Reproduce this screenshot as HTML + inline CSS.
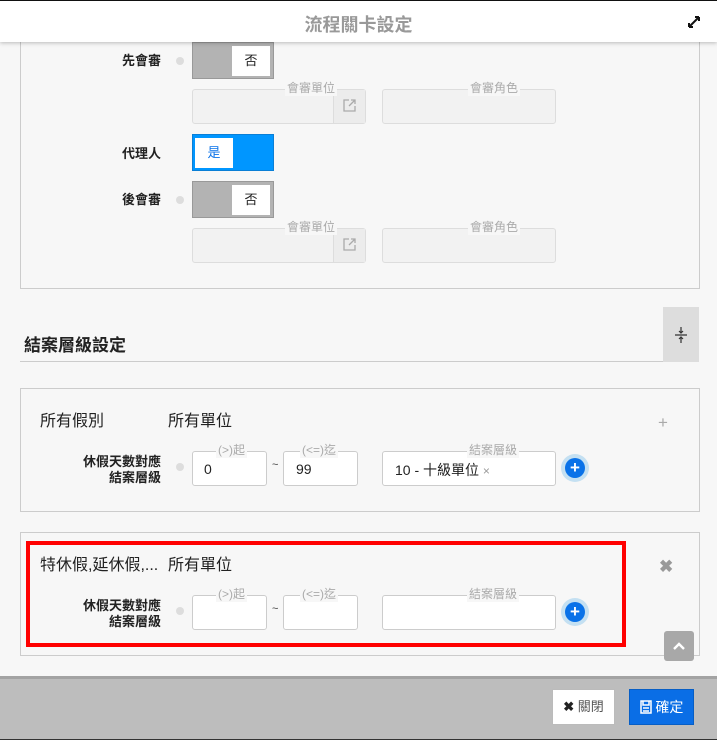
<!DOCTYPE html>
<html><head><meta charset="utf-8"><style>
*{box-sizing:border-box;margin:0;padding:0}
body{width:717px;height:740px;overflow:hidden;background:#f7f7f7;font-family:"Liberation Sans","Noto Sans CJK TC",sans-serif;position:relative;color:#222}
.a{position:absolute}
.hdr{left:0;top:0;width:717px;height:42px;background:#fff;border-top:1px solid #111;box-shadow:0 1px 4px rgba(0,0,0,.25);z-index:5}
.lbl{font-size:13px;font-weight:bold;text-align:right;width:100px;line-height:16px}
.dot{width:8px;height:8px;border-radius:50%;background:#ddd}
.tg{width:82px;height:37px;background:#b3b3b3;border:1px solid #999}
.tg .k{position:absolute;top:3px;width:38px;height:30px;background:#fff;font-size:13px;text-align:center;line-height:30px}
.fs{border:1px solid #ddd;border-radius:3px;background:#f2f2f2}
.fw{border:1px solid #ccc;border-radius:3px;background:#fff}
.lg{position:absolute;top:-9px;font-size:12px;color:#aaa;line-height:15px;background:#f7f7f7;padding:0 2px;white-space:nowrap}
.panel{border:1px solid #ccc}
.pl{width:20px;height:20px;border-radius:50%;background:#0a72e8;box-shadow:0 0 0 4px #c4e0f2;color:#fff;font-size:17px;line-height:19px;text-align:center;font-weight:bold}
</style></head><body>
<div class="a hdr"><div class="a" style="left:0;right:0;top:10px;text-align:center;font-size:18px;color:#999;font-weight:bold">流程關卡設定</div>
<svg class="a" style="left:688px;top:15px" width="12" height="12" viewBox="0 0 12 12"><path d="M1 11L11 1M11 1H7M11 1V5M1 11H5M1 11V7" stroke="#111" stroke-width="2" fill="none"/></svg></div>

<div class="a panel" style="left:20px;top:30px;width:680px;height:259px"></div>

<div class="a lbl" style="left:61px;top:53px">先會審</div><div class="a dot" style="left:176px;top:57px"></div>
<div class="a tg" style="left:192px;top:42px"><div class="k" style="left:39px">否</div></div>
<div class="a fs" style="left:192px;top:89px;width:174px;height:35px"><div class="a" style="right:0;top:0;width:32px;height:33px;background:#ececec;border-left:1px solid #ddd"><svg class="a" style="left:9px;top:9px" width="13" height="13" viewBox="0 0 13 13"><path d="M6 1H1V12H12V7M8 1H12V5M12 1L6 7" stroke="#aaa" stroke-width="1.3" fill="none"/></svg></div></div>
<div class="a lg" style="left:285px;top:81px">會審單位</div>
<div class="a fs" style="left:382px;top:89px;width:174px;height:35px"></div>
<div class="a lg" style="left:468px;top:81px">會審角色</div>

<div class="a lbl" style="left:61px;top:146px">代理人</div>
<div class="a tg" style="left:192px;top:134px;background:#0096ff;border-color:#0a7fd6"><div class="k" style="left:2px;color:#0a72e8">是</div></div>

<div class="a lbl" style="left:61px;top:192px">後會審</div><div class="a dot" style="left:176px;top:196px"></div>
<div class="a tg" style="left:192px;top:181px"><div class="k" style="left:39px">否</div></div>
<div class="a fs" style="left:192px;top:228px;width:174px;height:35px"><div class="a" style="right:0;top:0;width:32px;height:33px;background:#ececec;border-left:1px solid #ddd"><svg class="a" style="left:9px;top:9px" width="13" height="13" viewBox="0 0 13 13"><path d="M6 1H1V12H12V7M8 1H12V5M12 1L6 7" stroke="#aaa" stroke-width="1.3" fill="none"/></svg></div></div>
<div class="a lg" style="left:285px;top:220px">會審單位</div>
<div class="a fs" style="left:382px;top:228px;width:174px;height:35px"></div>
<div class="a lg" style="left:468px;top:220px">會審角色</div>

<div class="a" style="left:24px;top:336px;font-size:17px;font-weight:bold;line-height:20px">結案層級設定</div>
<div class="a" style="left:20px;top:361px;width:644px;height:1px;background:#ccc"></div>
<div class="a" style="left:663px;top:307px;width:36px;height:55px;background:#ddd"><svg class="a" style="left:11px;top:20px" width="14" height="16" viewBox="0 0 14 16"><path d="M1 8H13M7 0V6M5 4L7 6L9 4M7 16V10M5 12L7 10L9 12" stroke="#333" stroke-width="1.2" fill="none"/></svg></div>

<div class="a panel" style="left:20px;top:388px;width:680px;height:124px"></div>
<div class="a" style="left:40px;top:413px;font-size:16px;line-height:18px">所有假別</div>
<div class="a" style="left:168px;top:413px;font-size:16px;line-height:18px">所有單位</div>
<div class="a" style="left:658px;top:413px;font-size:17px;color:#aaa">+</div>
<div class="a lbl" style="left:61px;top:454px;line-height:16px">休假天數對應<br>結案層級</div><div class="a dot" style="left:176px;top:463px"></div>
<div class="a fw" style="left:192px;top:451px;width:75px;height:35px"><div class="a" style="left:11px;top:9px;font-size:14px">0</div></div>
<div class="a lg" style="left:216px;top:443px">(&gt;)起</div>
<div class="a" style="left:272px;top:459px;font-size:11px;color:#444">~</div>
<div class="a fw" style="left:283px;top:451px;width:75px;height:35px"><div class="a" style="left:12px;top:9px;font-size:14px">99</div></div>
<div class="a lg" style="left:300px;top:443px">(&lt;=)迄</div>
<div class="a fw" style="left:382px;top:451px;width:174px;height:35px"><div class="a" style="left:12px;top:8px;font-size:14px">10 - 十級單位 <span style="color:#999;font-size:12px">×</span></div></div>
<div class="a lg" style="left:467px;top:443px">結案層級</div>
<div class="a pl" style="left:565px;top:458px">+</div>

<div class="a panel" style="left:20px;top:532px;width:680px;height:124px"></div>
<div class="a" style="left:40px;top:557px;font-size:16px;line-height:18px">特休假,延休假,...</div>
<div class="a" style="left:168px;top:557px;font-size:16px;line-height:18px">所有單位</div>
<div class="a" style="left:659px;top:557px;font-size:17px;color:#999;font-weight:bold">✖</div>
<div class="a lbl" style="left:61px;top:598px">休假天數對應<br>結案層級</div><div class="a dot" style="left:176px;top:607px"></div>
<div class="a fw" style="left:192px;top:595px;width:75px;height:35px"></div>
<div class="a lg" style="left:216px;top:587px">(&gt;)起</div>
<div class="a" style="left:272px;top:603px;font-size:11px;color:#444">~</div>
<div class="a fw" style="left:283px;top:595px;width:75px;height:35px"></div>
<div class="a lg" style="left:300px;top:587px">(&lt;=)迄</div>
<div class="a fw" style="left:382px;top:595px;width:174px;height:35px"></div>
<div class="a lg" style="left:467px;top:587px">結案層級</div>
<div class="a pl" style="left:565px;top:602px">+</div>
<div class="a" style="left:26px;top:541px;width:600px;height:106px;border:4px solid #f00"></div>
<div class="a" style="left:664px;top:631px;width:30px;height:30px;background:#a8a8a8;border-radius:3px"><svg class="a" style="left:9px;top:11px" width="12" height="8" viewBox="0 0 12 8"><path d="M1 7L6 2L11 7" stroke="#fff" stroke-width="2.4" fill="none"/></svg></div>

<div class="a" style="left:0;top:676px;width:717px;height:64px;background:#bdbdbd;border-top:3px solid #a3a3a3;border-bottom:1px solid #333"></div>
<div class="a" style="left:552px;top:689px;width:63px;height:36px;background:#fff;border:1px solid #bbb;font-size:13px;line-height:34px;text-align:center;color:#555"><b style="color:#222">✖</b> 關閉</div>
<div class="a" style="left:629px;top:689px;width:65px;height:36px;background:#0a6ee6;border:1px solid #075ec5;font-size:14px;line-height:34px;text-align:center;color:#fff"><svg style="vertical-align:-2px" width="12" height="14" viewBox="0 0 12 14"><path d="M1 1H11V13H1ZM3 1V5H9V1M3 8H9M3 11H9" stroke="#fff" stroke-width="1.5" fill="none"/></svg> 確定</div>
</body></html>
